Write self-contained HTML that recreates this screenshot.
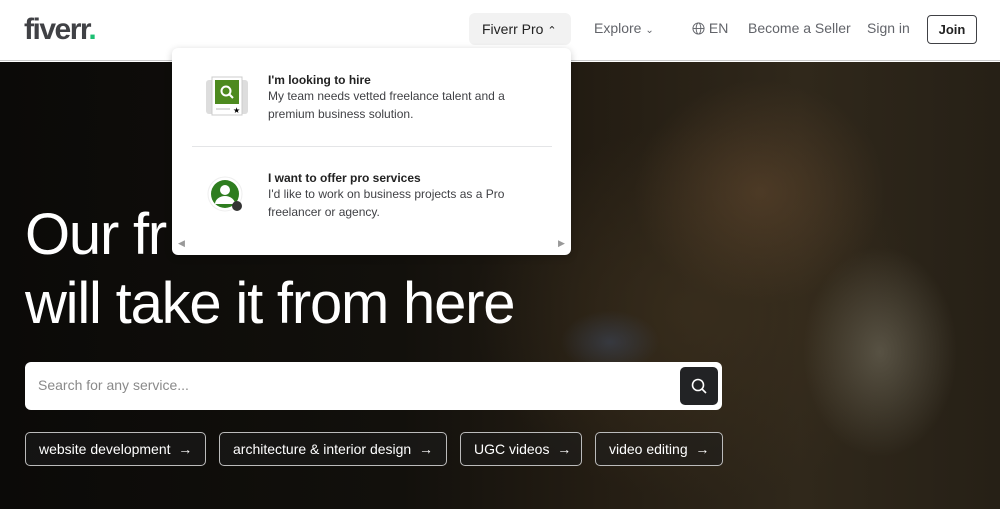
<!DOCTYPE html>
<html><head><meta charset="utf-8"><style>
*{margin:0;padding:0;box-sizing:border-box}
body{width:1000px;height:509px;overflow:hidden;font-family:"Liberation Sans",sans-serif;background:#fff;position:relative}
.hdr{position:absolute;left:0;top:0;width:1000px;height:61px;background:#fff;border-bottom:1px solid #c9c9c9}
.logo{position:absolute;left:24px;top:13px;font-size:30px;font-weight:bold;color:#404145;letter-spacing:-1.5px}
.logo span{color:#1dbf73}
.nav{position:absolute;top:0;height:61px;font-size:14px;color:#62646a;line-height:57px}
.pro{position:absolute;left:469px;top:13px;width:102px;height:32px;background:#f2f2f2;border-radius:6px;color:#222;font-size:14px;line-height:32px;padding-left:13px}
.join{position:absolute;left:927px;top:15px;width:50px;height:29px;border:1px solid #404145;border-radius:4px;font-size:13px;font-weight:bold;color:#222;text-align:center;line-height:27px}
.hero{position:absolute;left:0;top:62px;width:1000px;height:447px;background:
radial-gradient(ellipse 110px 150px at 880px 290px,rgba(105,100,85,.7),transparent 70%),
radial-gradient(ellipse 70px 45px at 610px 280px,rgba(60,70,90,.6),transparent 70%),
radial-gradient(ellipse 180px 160px at 760px 130px,rgba(95,70,45,.6),transparent 70%),
radial-gradient(ellipse 300px 250px at 700px 250px,rgba(60,48,30,.75),transparent 75%),
linear-gradient(90deg,#0b0a08 0%,#12100c 40%,#241d13 60%,#30281b 80%,#262016 100%)}
.h1{position:absolute;left:25px;color:#fff;font-size:58px;letter-spacing:-1.2px;font-weight:normal}
.search{position:absolute;left:25px;top:362px;width:697px;height:48px;background:#fff;border-radius:6px}
.search .ph{position:absolute;left:13px;top:15px;font-size:14px;color:#8a8a8a}
.search .btn{position:absolute;right:4px;top:5px;width:38px;height:38px;background:#222325;border-radius:5px}
.chip{position:absolute;top:432px;height:34px;border:1px solid #bbb;border-radius:5px;color:#fff;font-size:14px;line-height:32px;padding-left:13px;background:rgba(30,30,30,.55)}
.dd{position:absolute;left:172px;top:48px;width:399px;height:207px;background:#fff;border-radius:6px;box-shadow:0 2px 8px rgba(0,0,0,.2)}
.dd b{font-size:12px;color:#222;display:block}
.dd p{font-size:12px;color:#404145;line-height:18px}
</style></head><body>
<div class="hero">
<div class="h1" style="top:139px">Our fr</div>
<div class="h1" style="top:208px">will take it from here</div>
</div>
<div class="search"><div class="ph">Search for any service...</div><div class="btn"><svg width="38" height="38" viewBox="0 0 38 38"><circle cx="18" cy="18" r="5.5" fill="none" stroke="#fff" stroke-width="1.6"/><path d="M22 22l4 4" stroke="#fff" stroke-width="1.6"/></svg></div></div>
<div class="chip" style="left:25px;width:181px">website development &nbsp;→</div>
<div class="chip" style="left:219px;width:228px">architecture &amp; interior design &nbsp;→</div>
<div class="chip" style="left:460px;width:122px">UGC videos &nbsp;→</div>
<div class="chip" style="left:595px;width:128px">video editing &nbsp;→</div>
<div class="hdr">
<div class="logo">fiverr<span>.</span></div>
<div class="pro">Fiverr Pro <span style="font-size:11px">&#8963;</span></div>
<div class="nav" style="left:594px">Explore <span style="font-size:10px">&#8964;</span></div>
<div class="nav" style="left:692px"><svg width="13" height="13" viewBox="0 0 14 14" style="vertical-align:-2px"><circle cx="7" cy="7" r="6" fill="none" stroke="#62646a"/><ellipse cx="7" cy="7" rx="2.5" ry="6" fill="none" stroke="#62646a"/><path d="M1 7h12" stroke="#62646a"/></svg> EN</div>
<div class="nav" style="left:748px">Become a Seller</div>
<div class="nav" style="left:867px">Sign in</div>
<div class="join">Join</div>
</div>
<div class="dd">
<svg style="position:absolute;left:34px;top:28px" width="42" height="42" viewBox="0 0 42 42"><rect x="0" y="4" width="42" height="34" rx="3" fill="#ddd"/><rect x="6" y="1" width="30" height="38" fill="#fff" stroke="#ccc"/><rect x="9" y="4" width="24" height="24" fill="#4d8a1f"/><circle cx="20" cy="15" r="4.5" fill="none" stroke="#fff" stroke-width="2"/><path d="M23 18l4 4" stroke="#fff" stroke-width="2"/><path d="M10 33h14" stroke="#bbb"/><text x="27" y="37" font-size="8">★</text></svg>
<div style="position:absolute;left:96px;top:25px;width:280px"><b>I'm looking to hire</b><p>My team needs vetted freelance talent and a premium business solution.</p></div>
<div style="position:absolute;left:20px;top:98px;width:360px;height:1px;background:#e4e5e7"></div>
<svg style="position:absolute;left:34px;top:128px" width="40" height="40" viewBox="0 0 40 40"><circle cx="19" cy="18" r="17" fill="#fff" stroke="#eee"/><circle cx="19" cy="18" r="14" fill="#2e7d1f"/><circle cx="19" cy="14" r="5" fill="#fff"/><path d="M9 28a10 8 0 0 1 20 0z" fill="#fff"/><circle cx="31" cy="30" r="5" fill="#333"/></svg>
<div style="position:absolute;left:96px;top:123px;width:280px"><b>I want to offer pro services</b><p>I'd like to work on business projects as a Pro freelancer or agency.</p></div>
<div style="position:absolute;left:6px;top:190px;font-size:9px;color:#999">◀</div>
<div style="position:absolute;left:386px;top:190px;font-size:9px;color:#999">▶</div>
</div>
</body></html>
